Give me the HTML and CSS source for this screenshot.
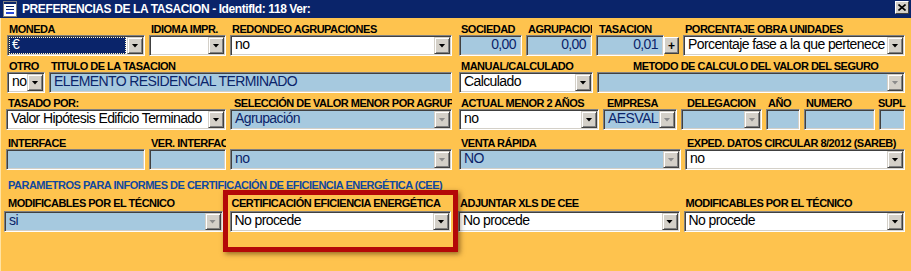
FILE: index.html
```html
<!DOCTYPE html>
<html lang="es">
  <head>
    <meta charset="UTF-8" />
    <meta name="viewport" content="width=device-width, initial-scale=1.0" />
    <title>Preferencias de la tasación</title>
    <link rel="stylesheet" href="styles.css">
  </head>

  <body>
    <div class="ventana">
      <div class="barra-titulo">
        <svg class="icono" viewBox="0 0 16 16" width="16" height="16">
          <rect x="1.5" y="0.5" width="13" height="15" fill="#fff" stroke="#808080" />
          <rect x="2" y="1" width="12" height="2" fill="#0a246a" />
          <rect x="4" y="5" width="8" height="1" fill="#0a246a" />
          <rect x="4" y="8" width="8" height="1" fill="#0a246a" />
          <rect x="4" y="11" width="8" height="2" fill="#2a4ad8" />
        </svg>
        <span class="texto-titulo">PREFERENCIAS DE LA TASACION - IdentifId: 118 Ver:</span>
        <span class="cerrar">
          <svg viewBox="0 0 8 7" width="8" height="7">
            <path d="M0.5 0.5 L7.5 6.5 M7.5 0.5 L0.5 6.5" stroke="#000" stroke-width="1.6" />
          </svg>
        </span>
      </div>

      <div class="contenido">
        <!-- fila 1 -->
        <div class="fila fila-1 desplazada">
          <div class="campo moneda">
            <label>MONEDA</label>
            <div class="caja foco"><span class="valor">€</span><span class="flecha"></span></div>
          </div>
          <div class="campo idioma">
            <label>IDIOMA IMPR.</label>
            <div class="caja"><span class="valor"></span><span class="flecha"></span></div>
          </div>
          <div class="campo redondeo">
            <label>REDONDEO AGRUPACIONES</label>
            <div class="caja"><span class="valor">no</span><span class="flecha"></span></div>
          </div>
          <div class="campo sociedad col-d">
            <label>SOCIEDAD</label>
            <div class="caja azul derecha"><span class="valor">0,00</span></div>
          </div>
          <div class="campo agrupacion">
            <label>AGRUPACION</label>
            <div class="caja azul derecha"><span class="valor">0,00</span></div>
          </div>
          <div class="campo tasacion">
            <label>TASACION</label>
            <div class="grupo">
              <div class="caja azul derecha"><span class="valor">0,01</span></div>
              <span class="mas">+</span>
            </div>
          </div>
          <div class="campo porcentaje">
            <label>PORCENTAJE OBRA UNIDADES</label>
            <div class="caja"><span class="valor">Porcentaje fase a la que pertenece</span><span class="flecha"></span></div>
          </div>
        </div>

        <!-- fila 2 -->
        <div class="fila fila-2 desplazada">
          <div class="campo otro">
            <label>OTRO</label>
            <div class="caja"><span class="valor">no</span><span class="flecha"></span></div>
          </div>
          <div class="campo titulo">
            <label>TITULO DE LA TASACION</label>
            <div class="caja azul"><span class="valor">ELEMENTO RESIDENCIAL TERMINADO</span></div>
          </div>
          <div class="campo manual col-d">
            <label>MANUAL/CALCULADO</label>
            <div class="caja"><span class="valor">Calculado</span><span class="flecha"></span></div>
          </div>
          <div class="campo metodo">
            <label>METODO DE CALCULO DEL VALOR DEL SEGURO</label>
            <div class="caja azul deshabilitado"><span class="valor"></span><span class="flecha"></span></div>
          </div>
        </div>

        <!-- fila 3 -->
        <div class="fila fila-3">
          <div class="campo tasado">
            <label>TASADO POR:</label>
            <div class="caja"><span class="valor">Valor Hipótesis Edificio Terminado</span><span class="flecha"></span></div>
          </div>
          <div class="campo seleccion">
            <label>SELECCIÓN DE VALOR MENOR POR AGRUPACIÓN</label>
            <div class="caja azul deshabilitado"><span class="valor">Agrupación</span><span class="flecha"></span></div>
          </div>
          <div class="campo actual col-d">
            <label>ACTUAL MENOR 2 AÑOS</label>
            <div class="caja"><span class="valor">no</span><span class="flecha"></span></div>
          </div>
          <div class="campo empresa">
            <label>EMPRESA</label>
            <div class="caja azul deshabilitado"><span class="valor">AESVAL</span><span class="flecha"></span></div>
          </div>
          <div class="campo delegacion">
            <label>DELEGACION</label>
            <div class="caja azul deshabilitado"><span class="valor"></span><span class="flecha"></span></div>
          </div>
          <div class="campo anio">
            <label>AÑO</label>
            <div class="caja azul"><span class="valor"></span></div>
          </div>
          <div class="campo numero">
            <label>NUMERO</label>
            <div class="caja azul"><span class="valor"></span></div>
          </div>
          <div class="campo supl">
            <label>SUPL</label>
            <div class="caja azul"><span class="valor"></span></div>
          </div>
        </div>

        <!-- fila 4 -->
        <div class="fila fila-4">
          <div class="campo interface">
            <label>INTERFACE</label>
            <div class="caja azul"><span class="valor"></span></div>
          </div>
          <div class="campo ver">
            <label>VER. INTERFACE</label>
            <div class="caja azul"><span class="valor"></span></div>
          </div>
          <div class="campo vacio">
            <label></label>
            <div class="caja azul deshabilitado"><span class="valor">no</span><span class="flecha"></span></div>
          </div>
          <div class="campo venta col-d">
            <label>VENTA RÁPIDA</label>
            <div class="caja azul deshabilitado"><span class="valor">NO</span><span class="flecha"></span></div>
          </div>
          <div class="campo exped">
            <label>EXPED. DATOS CIRCULAR 8/2012 (SAREB)</label>
            <div class="caja"><span class="valor">no</span><span class="flecha"></span></div>
          </div>
        </div>

        <div class="seccion">PARAMETROS PARA INFORMES DE CERTIFICACIÓN DE EFICIENCIA ENERGÉTICA (CEE)</div>

        <!-- fila 6 -->
        <div class="fila fila-6">
          <div class="campo mod-tecnico">
            <label>MODIFICABLES POR EL TÉCNICO</label>
            <div class="caja azul deshabilitado"><span class="valor">si</span><span class="flecha"></span></div>
          </div>
          <div class="campo certificacion">
            <label>CERTIFICACIÓN EFICIENCIA ENERGÉTICA</label>
            <div class="caja"><span class="valor">No procede</span><span class="flecha"></span></div>
          </div>
          <div class="campo adjuntar col-d">
            <label>ADJUNTAR XLS DE CEE</label>
            <div class="caja"><span class="valor">No procede</span><span class="flecha"></span></div>
          </div>
          <div class="campo mod-tecnico-2">
            <label>MODIFICABLES POR EL TÉCNICO</label>
            <div class="caja"><span class="valor">No procede</span><span class="flecha"></span></div>
          </div>
        </div>
      </div>

      <div class="marca"></div>
    </div>
  </body>
</html>
```

FILE: styles.css
```css
* {
  box-sizing: border-box;
}

body {
  margin: 0;
  background-color: #fec34e;
  font-family: "Liberation Sans", Arial, sans-serif;
}

.ventana {
  position: relative;
  width: 911px;
  height: 271px;
  background-color: #fec34e;
  box-shadow: inset 1px 0 0 #ffe3a3;
  overflow: hidden;
}

/* barra de titulo */
.barra-titulo {
  display: flex;
  align-items: center;
  height: 18px;
  padding: 0 2px;
  background-color: #0a246a;
  color: #fff;
}

.icono {
  margin-right: 4px;
}

.texto-titulo {
  flex: 1;
  font-size: 12px;
  font-weight: bold;
  letter-spacing: -0.4px;
  line-height: 18px;
  white-space: nowrap;
}

.cerrar {
  display: flex;
  align-items: center;
  justify-content: center;
  align-self: flex-start;
  margin-top: 1px;
  width: 14px;
  height: 13px;
  background-color: #d4d0c8;
  border: 1px solid;
  border-color: #fff #404040 #404040 #fff;
}

/* contenido */
.contenido {
  padding: 6px 6px 0 6px;
}

.fila {
  display: flex;
  gap: 4px;
  margin-top: 5px;
}

.fila-1 {
  margin-top: 0;
}

.fila-4 {
  margin-top: 8px;
}

.fila-6 {
  margin-top: 7px;
  margin-left: -2px;
}

.desplazada {
  padding-left: 1px;
}

.campo {
  display: flex;
  flex-direction: column;
}

.campo label {
  display: block;
  height: 13px;
  margin-top: -2px;
  padding-top: 2px;
  padding-left: 2px;
  font-size: 11px;
  line-height: 11px;
  font-weight: bold;
  letter-spacing: -0.5px;
  color: #000;
  white-space: nowrap;
  overflow: hidden;
}

.col-d {
  margin-left: 3px;
}

.seccion {
  margin-top: 10px;
  height: 11px;
  padding-left: 2px;
  font-size: 11px;
  line-height: 11px;
  font-weight: bold;
  letter-spacing: -0.5px;
  color: #1048a0;
  white-space: nowrap;
}

/* cajas tipo windows */
.caja {
  display: flex;
  width: 100%;
  height: 21px;
  padding: 1px;
  border: 1px solid;
  border-color: #808080 #fff #fff #808080;
  box-shadow: inset 1px 1px 0 #404040, inset -1px -1px 0 #d4d0c8;
  background-color: #fff;
  color: #000;
  font-size: 14px;
  line-height: 15px;
  letter-spacing: -0.6px;
}

.caja.azul {
  background-color: #a6c9df;
  color: #0a246a;
}

.valor {
  flex: 1;
  min-width: 0;
  padding-left: 3px;
  white-space: nowrap;
  overflow: hidden;
}

.derecha .valor {
  text-align: right;
  padding-right: 4px;
}

.foco .valor {
  margin-right: 1px;
  background-color: #0a246a;
  color: #fff;
  outline: 1px dotted #fff6c8;
  outline-offset: -1px;
}

.flecha {
  display: flex;
  align-items: center;
  justify-content: center;
  flex: none;
  width: 16px;
  background-color: #d4d0c8;
  border: 1px solid;
  border-color: #d4d0c8 #404040 #404040 #d4d0c8;
  box-shadow: inset 1px 1px 0 #fff, inset -1px -1px 0 #808080;
}

.flecha::after {
  content: "";
  width: 7px;
  height: 4px;
  background-color: #000;
  clip-path: polygon(0 0, 100% 0, 50% 100%);
}

.deshabilitado .flecha::after {
  background-color: #8c8c8c;
}

.grupo {
  display: flex;
  align-items: center;
}

.grupo .caja {
  width: 68px;
}

.mas {
  display: flex;
  align-items: center;
  justify-content: center;
  width: 15px;
  height: 17px;
  background-color: #d4d0c8;
  border: 1px solid;
  border-color: #fff #404040 #404040 #fff;
  box-shadow: inset -1px -1px 0 #808080;
  font-size: 12px;
  font-weight: bold;
}

/* anchos de campos */
.moneda { width: 138px; }
.idioma { width: 77px; }
.redondeo { width: 222px; }
.sociedad { width: 63px; }
.agrupacion { width: 66px; }
.tasacion { width: 83px; }
.tasacion label { padding-left: 3px; }
.porcentaje { width: 222px; }

.otro { width: 38px; }
.titulo { width: 403px; }
.manual { width: 134px; }
.metodo { width: 308px; }
.metodo label { padding-left: 36px; }

.tasado { width: 220px; }
.seleccion { width: 222px; }
.seleccion label { padding-left: 4px; }
.actual { width: 140px; }
.empresa { width: 74px; }
.empresa label { padding-left: 4px; }
.delegacion { width: 81px; }
.delegacion label { padding-left: 6px; }
.anio { width: 34px; }
.numero { width: 71px; }
.supl { width: 26px; }
.supl label { margin-left: -1px; padding-left: 0; overflow: visible; }

.interface { width: 139px; }
.ver { width: 77px; }
.vacio { width: 222px; }
.venta { width: 222px; }
.exped { width: 220px; }

.mod-tecnico { width: 219px; }
.mod-tecnico label { padding-left: 4px; }
.certificacion { width: 222px; margin-left: 3px; }
.adjuntar { width: 222px; }
.mod-tecnico-2 { width: 222px; }

.fila-6 .caja {
  margin-top: 2px;
}

/* recuadro rojo superpuesto */
.marca {
  position: absolute;
  left: 223px;
  top: 190px;
  width: 235px;
  height: 62px;
  border: 5px solid #b40808;
  box-shadow: 2px 2px 5px rgba(60, 30, 0, 0.55);
}
```
